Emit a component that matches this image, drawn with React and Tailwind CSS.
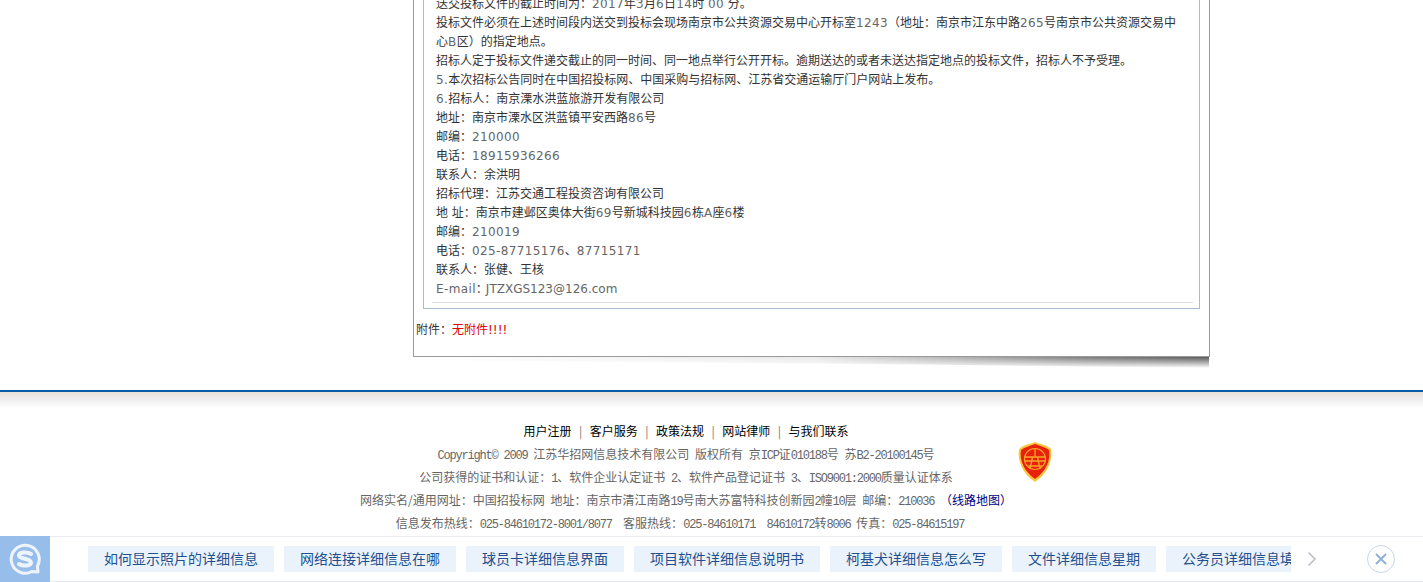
const bodyFont = '[font-family:"DejaVu_Sans","Noto_Sans_CJK_SC",sans-serif]';

const chips = [
  '如何显示照片的详细信息',
  '网络连接详细信息在哪',
  '球员卡详细信息界面',
  '项目软件详细信息说明书',
  '柯基犬详细信息怎么写',
  '文件详细信息星期',
  '公务员详细信息填写',
];

// latin text in the notice is a little wider than plain 12px
function N({ children }) {
  return <span className="tracking-[0.37px] text-[#666]">{children}</span>;
}

// footer latin text sits on a 6px half-width grid
function M({ children }) {
  return (
    <span className="font-['Liberation_Mono',monospace] text-[12px] leading-none tracking-[-1.2px] [word-spacing:0]">{children}</span>
  );
}

function Notice() {
  return (
    <div className={`${bodyFont} pl-[4px] pr-[14px] text-[12px] leading-[19px] text-[#333]`}>
      <p>送交投标文件的截止时间为：<N>2017</N>年<N>3</N>月<N>6</N>日<N>14</N>时 <N>00</N> 分。</p>
      <p>
        投标文件必须在上述时间段内送交到投标会现场南京市公共资源交易中心开标室<N>1243</N>（地址：南京市江东中路<N>265</N>号南京市公共资源交易中心<N>B</N>区）的指定地点。
      </p>
      <p>招标人定于投标文件递交截止的同一时间、同一地点举行公开开标。逾期送达的或者未送达指定地点的投标文件，招标人不予受理。</p>
      <p><N>5.</N>本次招标公告同时在中国招投标网、中国采购与招标网、江苏省交通运输厅门户网站上发布。</p>
      <p><N>6.</N>招标人：南京溧水洪蓝旅游开发有限公司</p>
      <p>地址：南京市溧水区洪蓝镇平安西路<N>86</N>号</p>
      <p>邮编：<N>210000</N></p>
      <p>电话：<N>18915936266</N></p>
      <p>联系人：余洪明</p>
      <p>招标代理：江苏交通工程投资咨询有限公司</p>
      <p>地 址：南京市建邺区奥体大街<N>69</N>号新城科技园<N>6</N>栋<N>A</N>座<N>6</N>楼</p>
      <p>邮编：<N>210019</N></p>
      <p>电话：<N>025-87715176</N>、<N>87715171</N></p>
      <p>联系人：张健、王核</p>
      <p><N>E-mail</N><span className="mr-[-2px]">：</span><span className="text-[#666]">JTZXGS123@126.com</span></p>
    </div>
  );
}

function Shield() {
  return (
    <svg width="36" height="42" viewBox="0 0 36 42">
      <path d="M18 1 C23 3 30 4 34 8 C36 20 30 33 18 41 C6 33 0 20 2 8 C6 4 13 3 18 1 Z" fill="#fcc63a" />
      <path d="M18 3 C23 5 28 6 32 9 C34 20 28 31 18 38 C8 31 2 20 4 9 C8 6 13 5 18 3 Z" fill="#e8200c" />
      <circle cx="18" cy="18" r="10.5" fill="none" stroke="#f9a62a" strokeWidth="1.2" />
      <path d="M8 16 H28 M8 20 H28 M18 8 V16 M13 28 L15.5 16 M23 28 L20.5 16 M11 25 H25" fill="none" stroke="#f9a62a" strokeWidth="1.3" />
    </svg>
  );
}

function SogouLogo() {
  return (
    <svg width="34" height="34" viewBox="0 0 34 34" fill="none" stroke="#eef4fc">
      <path d="M24 29.5 A14 14 0 1 1 29.5 24 L30 30 Z" strokeWidth="3" strokeLinejoin="round" />
      <path d="M23 12 C19 9.5 11 10 11 13.5 C11 17.5 23 16 23 20.5 C23 24 15 24.5 11 22" strokeWidth="4" strokeLinecap="round" />
    </svg>
  );
}

export default function App() {
  return (
    <div className="relative h-[582px] overflow-hidden bg-white">
      <div className="ml-[413px] mt-[-5px] w-[797px]">
        <div className="relative h-[362px] border-r border-b border-l border-[#9a9a9a] bg-white">
          <div className="mx-[9px] h-[314px] border-r border-b border-l border-[#a9bccf] pl-[8px] pr-[6px]">
            <div className="h-[308px] overflow-hidden border-b border-[#dcdcdc]">
              <Notice />
            </div>
          </div>
          <p className={`${bodyFont} mt-[12px] pl-[2px] text-[12px] leading-[19px] text-[#333]`}>
            附件：<span className="text-[#e00000]">无附件!!!!</span>
          </p>
          <div className="absolute left-[10px] right-0 top-full mt-[1px] h-[11px] bg-gradient-to-b from-[#5a5a5a] to-transparent blur-[0.6px] [mask-image:linear-gradient(to_right,transparent,#0002_50%,#000c_85%,black)] [clip-path:polygon(0_0,100%_0,100%_100%,60%_65%,0_30%)]" />
        </div>
      </div>

      <div className="mt-[33px] border-t-2 border-[#0a5aa5]">
        <div className="h-[16px] bg-gradient-to-b from-[#e8dfd9] via-[#efefef] to-white" />
        <div className="flex justify-center pt-[13px] [font-family:'Noto_Sans_CJK_SC',sans-serif]">
          <div className="w-[660px] text-center">
            <p className="flex h-[19px] items-center justify-center text-[12px] text-black">
              用户注册<span className="mx-[7.5px] text-[#777]">|</span>客户服务<span className="mx-[7.5px] text-[#777]">|</span>政策法规<span className="mx-[7.5px] text-[#777]">|</span>网站律师<span className="mx-[7.5px] text-[#777]">|</span>与我们联系
            </p>
            <div className="mt-[2px] text-[12px] leading-[23px] text-[#666] [word-spacing:3px]">
              <p className="h-[23px]"><M>Copyright© 2009</M> 江苏华招网信息技术有限公司 版权所有 京<M>ICP</M>证<M>010188</M>号 苏<M>B2-20100145</M>号</p>
              <p className="h-[23px]">公司获得的证书和认证：<M>1</M>、软件企业认定证书 <M>2</M>、软件产品登记证书 <M>3</M>、<M>ISO9001:2000</M>质量认证体系</p>
              <p className="h-[23px]">
                网络实名/通用网址：中国招投标网 地址：南京市清江南路<M>19</M>号南大苏富特科技创新园<M>2</M>幢<M>10</M>层 邮编：<M>210036</M>
                <span className="text-[#000080]"> （线路地图）</span>
              </p>
              <p className="h-[23px] pr-[12px]">信息发布热线：<M>025-84610172-8001/8077</M>&nbsp;&nbsp;客服热线：<M>025-84610171</M>&nbsp;&nbsp;<M>84610172</M>转<M>8006</M> 传真：<M>025-84615197</M></p>
            </div>
          </div>
          <div className="w-[51px] pl-[1px] pt-[20px]">
            <Shield />
          </div>
        </div>
      </div>

      <div className="absolute inset-x-0 bottom-0 flex h-[46px] items-center border-y border-[#e8ecf2] bg-white">
        <div className="flex h-[46px] w-[50px] shrink-0 items-center justify-center bg-[#97bdeb]">
          <SogouLogo />
        </div>
        <div className="ml-[38px] flex w-[1203px] gap-[10px] overflow-hidden [font-family:'Noto_Sans_CJK_SC',sans-serif]">
          {chips.map((chip) => (
            <span key={chip} className="h-[26px] shrink-0 bg-[#eaf3fb] px-[16px] text-[14px] leading-[24px] text-[#1f4f8f]">
              {chip}
            </span>
          ))}
        </div>
        <svg className="ml-[16px]" width="10" height="16" viewBox="0 0 10 16" fill="none" stroke="#b9c0c9" strokeWidth="1.6">
          <path d="M1.5 1.5 L8 8 L1.5 14.5" />
        </svg>
        <div className="ml-[50px] flex h-[28px] w-[28px] items-center justify-center rounded-full border border-[#c9d6e8]">
          <svg width="14" height="14" viewBox="0 0 14 14" stroke="#8fb0d8" strokeWidth="2">
            <path d="M2 2 L12 12 M12 2 L2 12" />
          </svg>
        </div>
      </div>
    </div>
  );
}
